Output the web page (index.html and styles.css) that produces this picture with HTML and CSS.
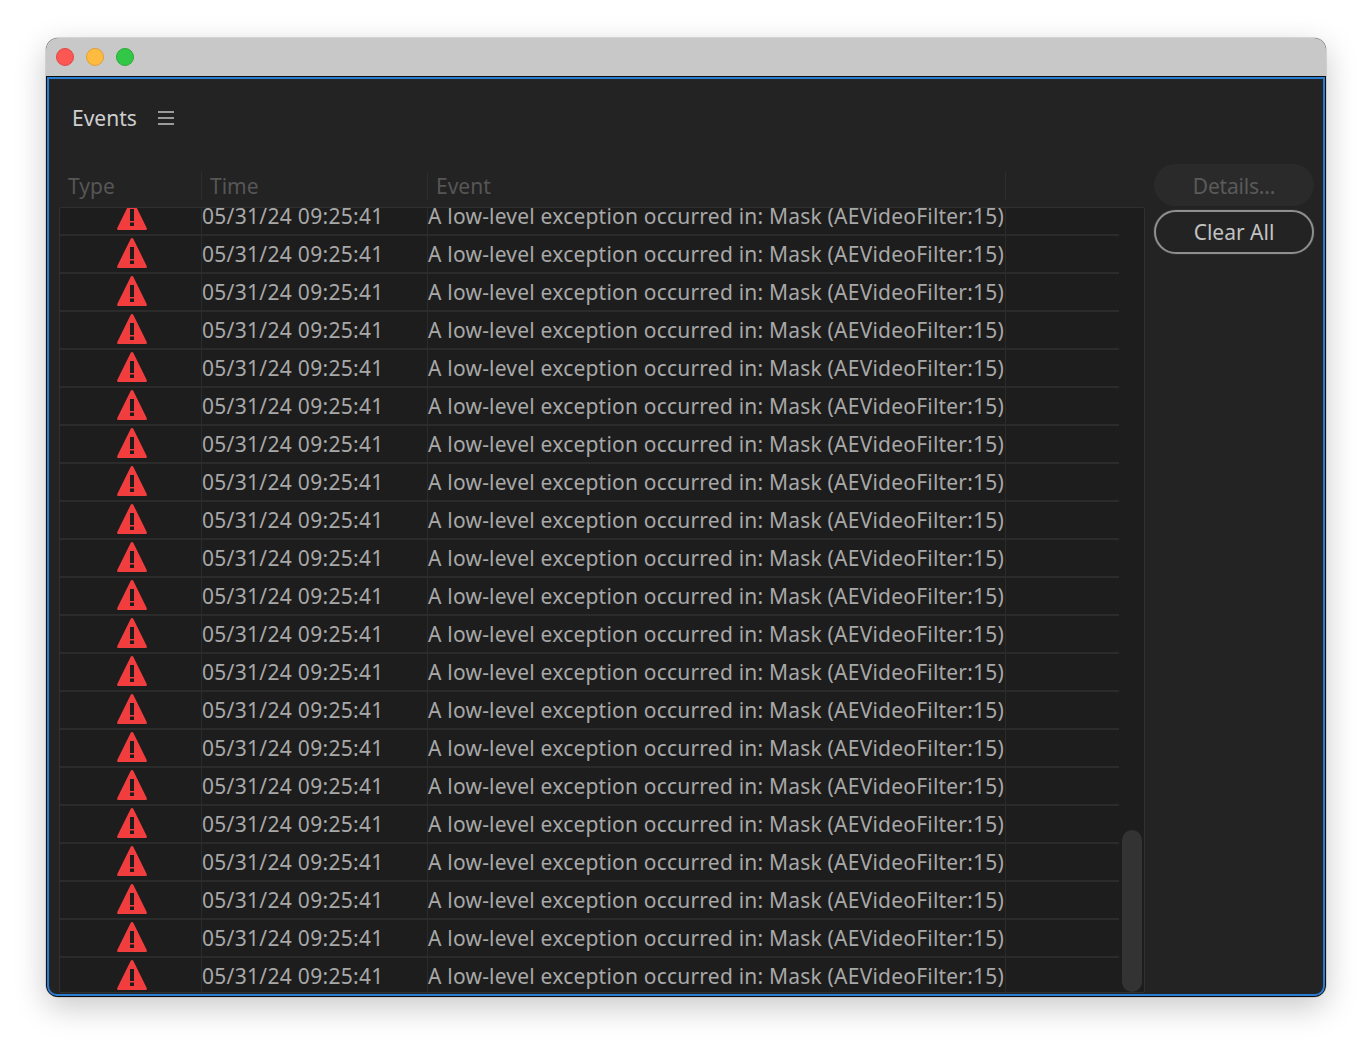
FILE: index.html
```html
<!DOCTYPE html>
<html lang="en">
<head>
<meta charset="utf-8">
<title>Events</title>
<link rel="stylesheet" href="styles.css">
</head>
<body>
<svg class="defs" width="0" height="0" aria-hidden="true">
  <symbol id="warn" viewBox="0 0 30 30">
    <path fill="#f23d3f" fill-rule="evenodd" d="M13.6 1 .3 27.9C-.2 29 .3 30 1.6 30h26.8c1.3 0 1.8-1 1.3-2.1L16.4 1c-.6-1.3-2.2-1.3-2.8 0ZM13 9h4v12h-4Zm0 13.500h4V26h-4Z"/>
  </symbol>
</svg>
<main class="window">
  <header class="titlebar">
    <span class="light red"></span>
    <span class="light yellow"></span>
    <span class="light green"></span>
  </header>
  <section class="panel">
    <div class="panel-title">
      <span class="panel-name">Events</span>
      <svg class="menu-icon" width="16" height="14" viewBox="0 0 16 14"><path d="M0 1h16M0 7h16M0 13h16" stroke="#c4c4c4" stroke-width="1.500" fill="none"/></svg>
    </div>
    <div class="panel-body">
      <div class="table">
        <div class="table-head">
          <span class="head-cell">Type</span>
          <span class="head-cell">Time</span>
          <span class="head-cell">Event</span>
        </div>
        <div class="list">
          <div class="rows">
            <div class="row"><span class="cell cell-type"><svg class="warn"><use href="#warn"/></svg></span><span class="cell cell-time">05/31/24 09:25:41</span><span class="cell cell-event">A low-level exception occurred in: Mask (AEVideoFilter:15)</span></div>
            <div class="row"><span class="cell cell-type"><svg class="warn"><use href="#warn"/></svg></span><span class="cell cell-time">05/31/24 09:25:41</span><span class="cell cell-event">A low-level exception occurred in: Mask (AEVideoFilter:15)</span></div>
            <div class="row"><span class="cell cell-type"><svg class="warn"><use href="#warn"/></svg></span><span class="cell cell-time">05/31/24 09:25:41</span><span class="cell cell-event">A low-level exception occurred in: Mask (AEVideoFilter:15)</span></div>
            <div class="row"><span class="cell cell-type"><svg class="warn"><use href="#warn"/></svg></span><span class="cell cell-time">05/31/24 09:25:41</span><span class="cell cell-event">A low-level exception occurred in: Mask (AEVideoFilter:15)</span></div>
            <div class="row"><span class="cell cell-type"><svg class="warn"><use href="#warn"/></svg></span><span class="cell cell-time">05/31/24 09:25:41</span><span class="cell cell-event">A low-level exception occurred in: Mask (AEVideoFilter:15)</span></div>
            <div class="row"><span class="cell cell-type"><svg class="warn"><use href="#warn"/></svg></span><span class="cell cell-time">05/31/24 09:25:41</span><span class="cell cell-event">A low-level exception occurred in: Mask (AEVideoFilter:15)</span></div>
            <div class="row"><span class="cell cell-type"><svg class="warn"><use href="#warn"/></svg></span><span class="cell cell-time">05/31/24 09:25:41</span><span class="cell cell-event">A low-level exception occurred in: Mask (AEVideoFilter:15)</span></div>
            <div class="row"><span class="cell cell-type"><svg class="warn"><use href="#warn"/></svg></span><span class="cell cell-time">05/31/24 09:25:41</span><span class="cell cell-event">A low-level exception occurred in: Mask (AEVideoFilter:15)</span></div>
            <div class="row"><span class="cell cell-type"><svg class="warn"><use href="#warn"/></svg></span><span class="cell cell-time">05/31/24 09:25:41</span><span class="cell cell-event">A low-level exception occurred in: Mask (AEVideoFilter:15)</span></div>
            <div class="row"><span class="cell cell-type"><svg class="warn"><use href="#warn"/></svg></span><span class="cell cell-time">05/31/24 09:25:41</span><span class="cell cell-event">A low-level exception occurred in: Mask (AEVideoFilter:15)</span></div>
            <div class="row"><span class="cell cell-type"><svg class="warn"><use href="#warn"/></svg></span><span class="cell cell-time">05/31/24 09:25:41</span><span class="cell cell-event">A low-level exception occurred in: Mask (AEVideoFilter:15)</span></div>
            <div class="row"><span class="cell cell-type"><svg class="warn"><use href="#warn"/></svg></span><span class="cell cell-time">05/31/24 09:25:41</span><span class="cell cell-event">A low-level exception occurred in: Mask (AEVideoFilter:15)</span></div>
            <div class="row"><span class="cell cell-type"><svg class="warn"><use href="#warn"/></svg></span><span class="cell cell-time">05/31/24 09:25:41</span><span class="cell cell-event">A low-level exception occurred in: Mask (AEVideoFilter:15)</span></div>
            <div class="row"><span class="cell cell-type"><svg class="warn"><use href="#warn"/></svg></span><span class="cell cell-time">05/31/24 09:25:41</span><span class="cell cell-event">A low-level exception occurred in: Mask (AEVideoFilter:15)</span></div>
            <div class="row"><span class="cell cell-type"><svg class="warn"><use href="#warn"/></svg></span><span class="cell cell-time">05/31/24 09:25:41</span><span class="cell cell-event">A low-level exception occurred in: Mask (AEVideoFilter:15)</span></div>
            <div class="row"><span class="cell cell-type"><svg class="warn"><use href="#warn"/></svg></span><span class="cell cell-time">05/31/24 09:25:41</span><span class="cell cell-event">A low-level exception occurred in: Mask (AEVideoFilter:15)</span></div>
            <div class="row"><span class="cell cell-type"><svg class="warn"><use href="#warn"/></svg></span><span class="cell cell-time">05/31/24 09:25:41</span><span class="cell cell-event">A low-level exception occurred in: Mask (AEVideoFilter:15)</span></div>
            <div class="row"><span class="cell cell-type"><svg class="warn"><use href="#warn"/></svg></span><span class="cell cell-time">05/31/24 09:25:41</span><span class="cell cell-event">A low-level exception occurred in: Mask (AEVideoFilter:15)</span></div>
            <div class="row"><span class="cell cell-type"><svg class="warn"><use href="#warn"/></svg></span><span class="cell cell-time">05/31/24 09:25:41</span><span class="cell cell-event">A low-level exception occurred in: Mask (AEVideoFilter:15)</span></div>
            <div class="row"><span class="cell cell-type"><svg class="warn"><use href="#warn"/></svg></span><span class="cell cell-time">05/31/24 09:25:41</span><span class="cell cell-event">A low-level exception occurred in: Mask (AEVideoFilter:15)</span></div>
            <div class="row"><span class="cell cell-type"><svg class="warn"><use href="#warn"/></svg></span><span class="cell cell-time">05/31/24 09:25:41</span><span class="cell cell-event">A low-level exception occurred in: Mask (AEVideoFilter:15)</span></div>
          </div>
          <div class="scroll-thumb"></div>
        </div>
      </div>
      <aside class="actions">
        <button class="btn btn-disabled" type="button">Details...</button>
        <button class="btn btn-outline" type="button">Clear All</button>
      </aside>
    </div>
  </section>
</main>
</body>
</html>
```
FILE: styles.css
```css
* { box-sizing: border-box; }
html, body { margin: 0; height: 100%; }
body {
  background: #fff;
  padding: 38px 46px 0;
  overflow: hidden;
  font-family: "Noto Sans", "Open Sans", sans-serif;
}
.defs { position: absolute; }
.window {
  width: 1280px;
  height: 959px;
  border-radius: 12px;
  display: flex;
  flex-direction: column;
  overflow: hidden;
  box-shadow: 0 0 0 0.5px #b5b5b5, 0 10px 32px rgba(0, 0, 0, 0.22);
  background: #0d0d0d;
}
.titlebar {
  height: 38px;
  flex: none;
  background: #c8c8c8;
  display: flex;
  align-items: center;
  gap: 12px;
  padding: 0 0 0 10px;
}
.light { width: 18px; height: 18px; border-radius: 50%; }
.red { background: #fc5753; border: 1px solid #df4744; }
.yellow { background: #fdbc40; border: 1px solid #de9f34; }
.green { background: #33c748; border: 1px solid #27aa35; }
.panel {
  flex: 1;
  min-height: 0;
  margin: 1px;
  border: 2px solid #2b7dd2;
  border-radius: 0 0 10px 10px;
  background: #232323;
  display: flex;
  flex-direction: column;
}
.panel-title {
  height: 85px;
  flex: none;
  padding: 0 0 8px 23px;
  display: flex;
  align-items: center;
  gap: 21px;
}
.panel-name { color: #cfcfcf; font-size: 21px; }
.panel-body {
  flex: 1;
  min-height: 0;
  display: flex;
  padding: 0 9px 1px 10px;
  gap: 9px;
}
.table {
  width: 1086px;
  display: flex;
  flex-direction: column;
  min-height: 0;
}
.table-head {
  height: 43px;
  flex: none;
  padding-top: 8px;
  display: grid;
  grid-template-columns: 143px 226px 578px;
}
.head-cell {
  color: #565656;
  font-size: 21px;
  line-height: 28px;
  height: 28px;
  padding-left: 8px;
  border-right: 1px solid #2e2e2e;
}
.head-cell:first-child { padding-left: 9px; }
.list {
  position: relative;
  flex: 1;
  min-height: 0;
  overflow: hidden;
  background: #1d1d1d;
  border: 1px solid #303030;
  border-radius: 2px;
}
.rows { margin-top: -10px; }
.row {
  width: 1059px;
  height: 38px;
  display: grid;
  grid-template-columns: 142px 226px 578px;
  align-items: stretch;
  border-bottom: 2px solid #2b2b2b;
}
.cell {
  color: #a8a8a8;
  font-size: 21px;
  line-height: 37px;
  white-space: nowrap;
  border-right: 1.500px solid #2b2b2b;
}
.cell-time { letter-spacing: 0.3px; }
.cell-event { letter-spacing: 0.21px; }
.cell-type { display: flex; justify-content: center; padding: 2px 0 0 2px; }
.warn { width: 30px; height: 30px; }
.scroll-thumb {
  position: absolute;
  right: 2px;
  bottom: 0;
  width: 20px;
  height: 162px;
  border-radius: 10px;
  background: #333;
}
.actions {
  width: 160px;
  flex: none;
  display: flex;
  flex-direction: column;
  gap: 4px;
}
.btn {
  width: 160px;
  font: inherit;
  font-size: 21px;
  padding: 0;
  border-radius: 22px;
}
.btn-disabled {
  height: 42px;
  padding-top: 2px;
  background: #2a2a2a;
  border: none;
  color: #5a5a5a;
  letter-spacing: -0.2px;
}
.btn-outline {
  height: 44px;
  background: transparent;
  border: 2px solid #8f8f8f;
  box-shadow: 0 0 1px #8f8f8f;
  color: #c2c2c2;
}
```
